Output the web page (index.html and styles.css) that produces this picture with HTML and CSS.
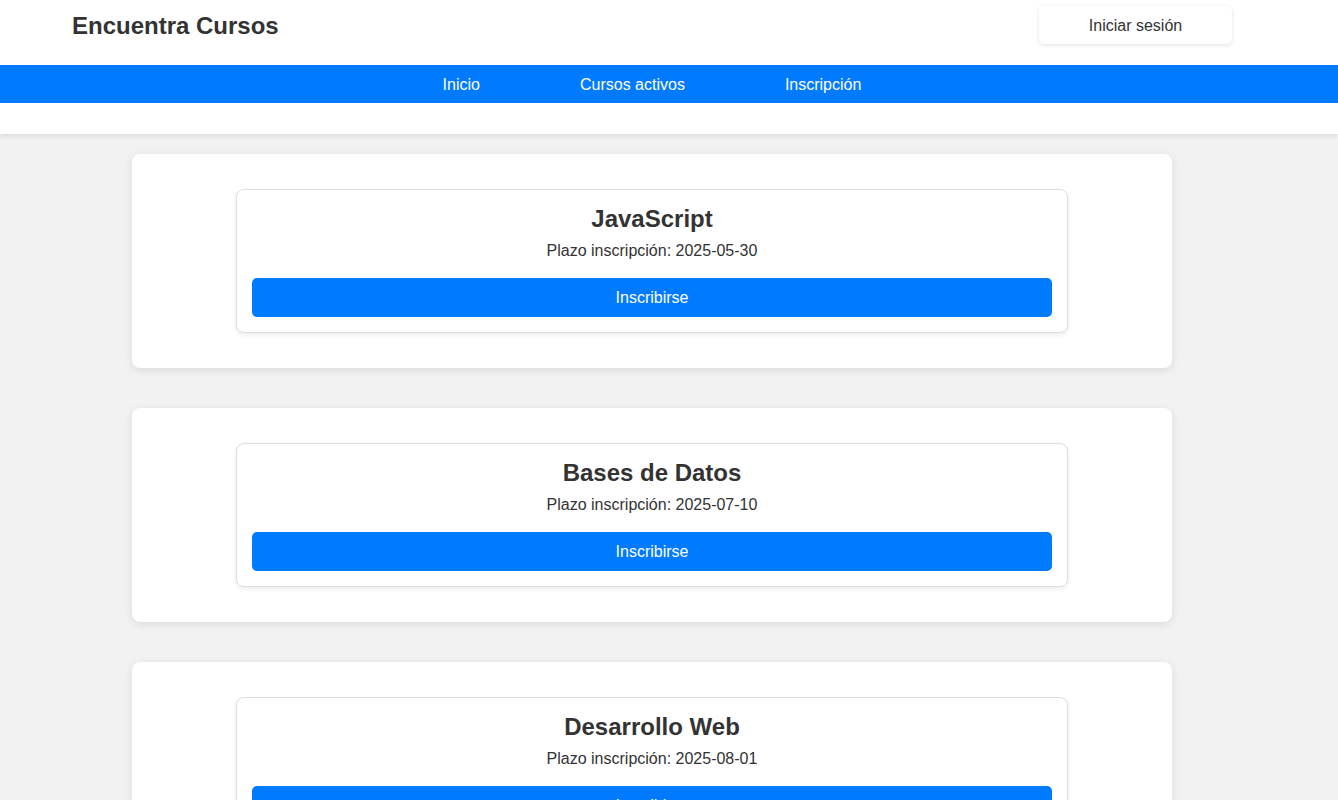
FILE: index.html
```html
<!DOCTYPE html>
<html lang="es">
<head>
<meta charset="utf-8">
<title>Encuentra Cursos</title>
<link rel="stylesheet" href="styles.css">
</head>
<body>
<header class="site-header">
  <div class="top-row">
    <h1 class="brand">Encuentra Cursos</h1>
    <button class="login-btn">Iniciar sesión</button>
  </div>
  <nav class="main-nav">
    <a href="#">Inicio</a>
    <a href="#">Cursos activos</a>
    <a href="#">Inscripción</a>
  </nav>
</header>
<main class="course-list">
  <section class="course-panel">
    <div class="course-card">
      <h2 class="course-title">JavaScript</h2>
      <p class="course-date">Plazo inscripción: 2025-05-30</p>
      <button class="enroll-btn">Inscribirse</button>
    </div>
  </section>
  <section class="course-panel">
    <div class="course-card">
      <h2 class="course-title">Bases de Datos</h2>
      <p class="course-date">Plazo inscripción: 2025-07-10</p>
      <button class="enroll-btn">Inscribirse</button>
    </div>
  </section>
  <section class="course-panel">
    <div class="course-card">
      <h2 class="course-title">Desarrollo Web</h2>
      <p class="course-date">Plazo inscripción: 2025-08-01</p>
      <button class="enroll-btn">Inscribirse</button>
    </div>
  </section>
</main>
</body>
</html>
```
FILE: styles.css
```css
* { box-sizing: border-box; }
html, body { margin: 0; padding: 0; }
body {
  background: #f2f2f2;
  font-family: "Liberation Sans", Arial, sans-serif;
  font-size: 16px;
  color: #333;
}
.site-header {
  background: #fff;
  padding-bottom: 31px;
  box-shadow: 0 2px 5px rgba(0,0,0,0.1);
}
.top-row {
  display: flex;
  justify-content: space-between;
  align-items: center;
  padding: 6px 106px 21px 72px;
}
.brand {
  margin: 0;
  padding-top: 2px;
  font-size: 24px;
  line-height: 36px;
  font-weight: bold;
  color: #333;
}
.login-btn {
  width: 193px;
  height: 38px;
  padding: 2px 0 0;
  border: none;
  background: #fff;
  border-radius: 5px;
  box-shadow: 0 1px 4px rgba(0,0,0,0.12);
  font-family: inherit;
  font-size: 16px;
  color: #333;
}
.main-nav {
  background: #007bff;
  height: 38px;
  display: flex;
  justify-content: center;
  align-items: center;
  gap: 100px;
  padding: 2px 34px 0 0;
}
.main-nav a {
  color: #fff;
  text-decoration: none;
  font-size: 16px;
}
.course-list {
  padding: 20px 34px 20px 0;
  display: flex;
  flex-direction: column;
  align-items: center;
  gap: 40px;
}
.course-panel {
  width: 1040px;
  background: #fff;
  border-radius: 8px;
  box-shadow: 0 2px 8px rgba(0,0,0,0.1);
  padding: 35px 0;
  display: flex;
  justify-content: center;
}
.course-card {
  width: 832px;
  border: 1px solid #ddd;
  border-radius: 8px;
  box-shadow: 0 2px 4px rgba(0,0,0,0.08);
  padding: 15px;
  text-align: center;
}
.course-title {
  margin: 0 0 8px;
  font-size: 24px;
  line-height: 28px;
  font-weight: bold;
  color: #333;
}
.course-date {
  margin: 0 0 18px;
  line-height: 19px;
}
.enroll-btn {
  display: block;
  width: 100%;
  height: 39px;
  border: none;
  border-radius: 5px;
  background: #007bff;
  color: #fff;
  font-family: inherit;
  font-size: 16px;
}
```
